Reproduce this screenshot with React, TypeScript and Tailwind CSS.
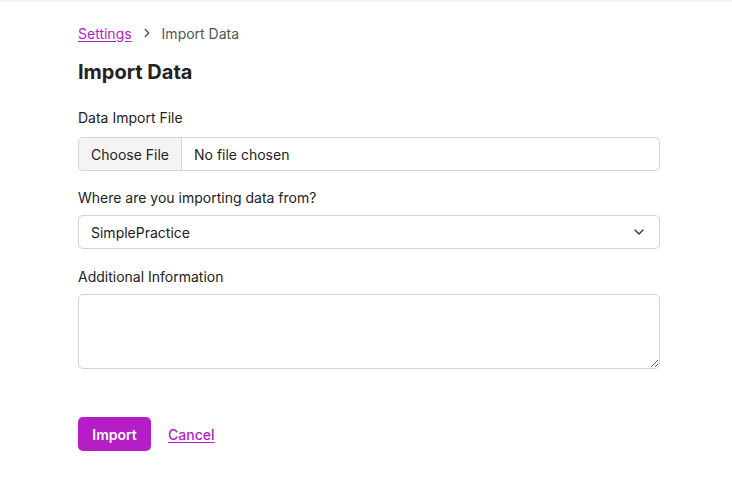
import { ChevronRight, ChevronDown } from "lucide-react";

export default function App() {
  return (
    <div className="min-h-[481px] bg-white font-['Inter',sans-serif] text-[#222] shadow-[inset_0_2px_2px_-1px_rgba(0,0,0,0.08)]">
      <div className="w-[582px] ml-[78px] pt-[24px]">
        <nav className="flex items-center gap-[8px] text-[14px] h-[18px]">
          <a href="#" className="text-[#b51dc6] underline underline-offset-2">Settings</a>
          <ChevronRight className="w-[14px] h-[14px] text-[#555]" strokeWidth={2.5} />
          <span className="text-[#555]">Import Data</span>
        </nav>
        <h1 className="mt-[17px] text-[20px] font-bold leading-[26px]">Import Data</h1>

        <div className="mt-[24px]">
          <label className="block text-[14px] leading-[18px]">Data Import File</label>
          <div className="mt-[10px] flex h-[34px] items-stretch rounded-[5px] border border-[#d4d4d8] text-[14px]">
            <span className="flex items-center px-[12px] bg-[#f4f4f5] border-r border-[#d4d4d8] rounded-l-[5px]">Choose File</span>
            <span className="flex items-center px-[12px]">No file chosen</span>
          </div>
        </div>

        <div className="mt-[18px]">
          <label className="block text-[14px] leading-[18px]">Where are you importing data from?</label>
          <div className="mt-[8px] flex h-[34px] items-center justify-between rounded-[5px] border border-[#d4d4d8] px-[12px] text-[14px]">
            <span>SimplePractice</span>
            <ChevronDown className="w-[16px] h-[16px] text-[#333]" strokeWidth={2} />
          </div>
        </div>

        <div className="mt-[19px]">
          <label className="block text-[14px] leading-[18px]">Additional Information</label>
          <textarea className="mt-[8px] block w-full h-[75px] rounded-[5px] border border-[#d4d4d8] px-[12px] py-[8px] text-[14px] outline-none" />
        </div>

        <div className="mt-[48px] flex items-center gap-[17px]">
          <button className="h-[34px] w-[73px] rounded-[5px] bg-[#b51dc6] text-[14px] font-semibold text-white">Import</button>
          <a href="#" className="text-[14px] font-medium text-[#b51dc6] underline underline-offset-2">Cancel</a>
        </div>
      </div>
    </div>
  );
}
